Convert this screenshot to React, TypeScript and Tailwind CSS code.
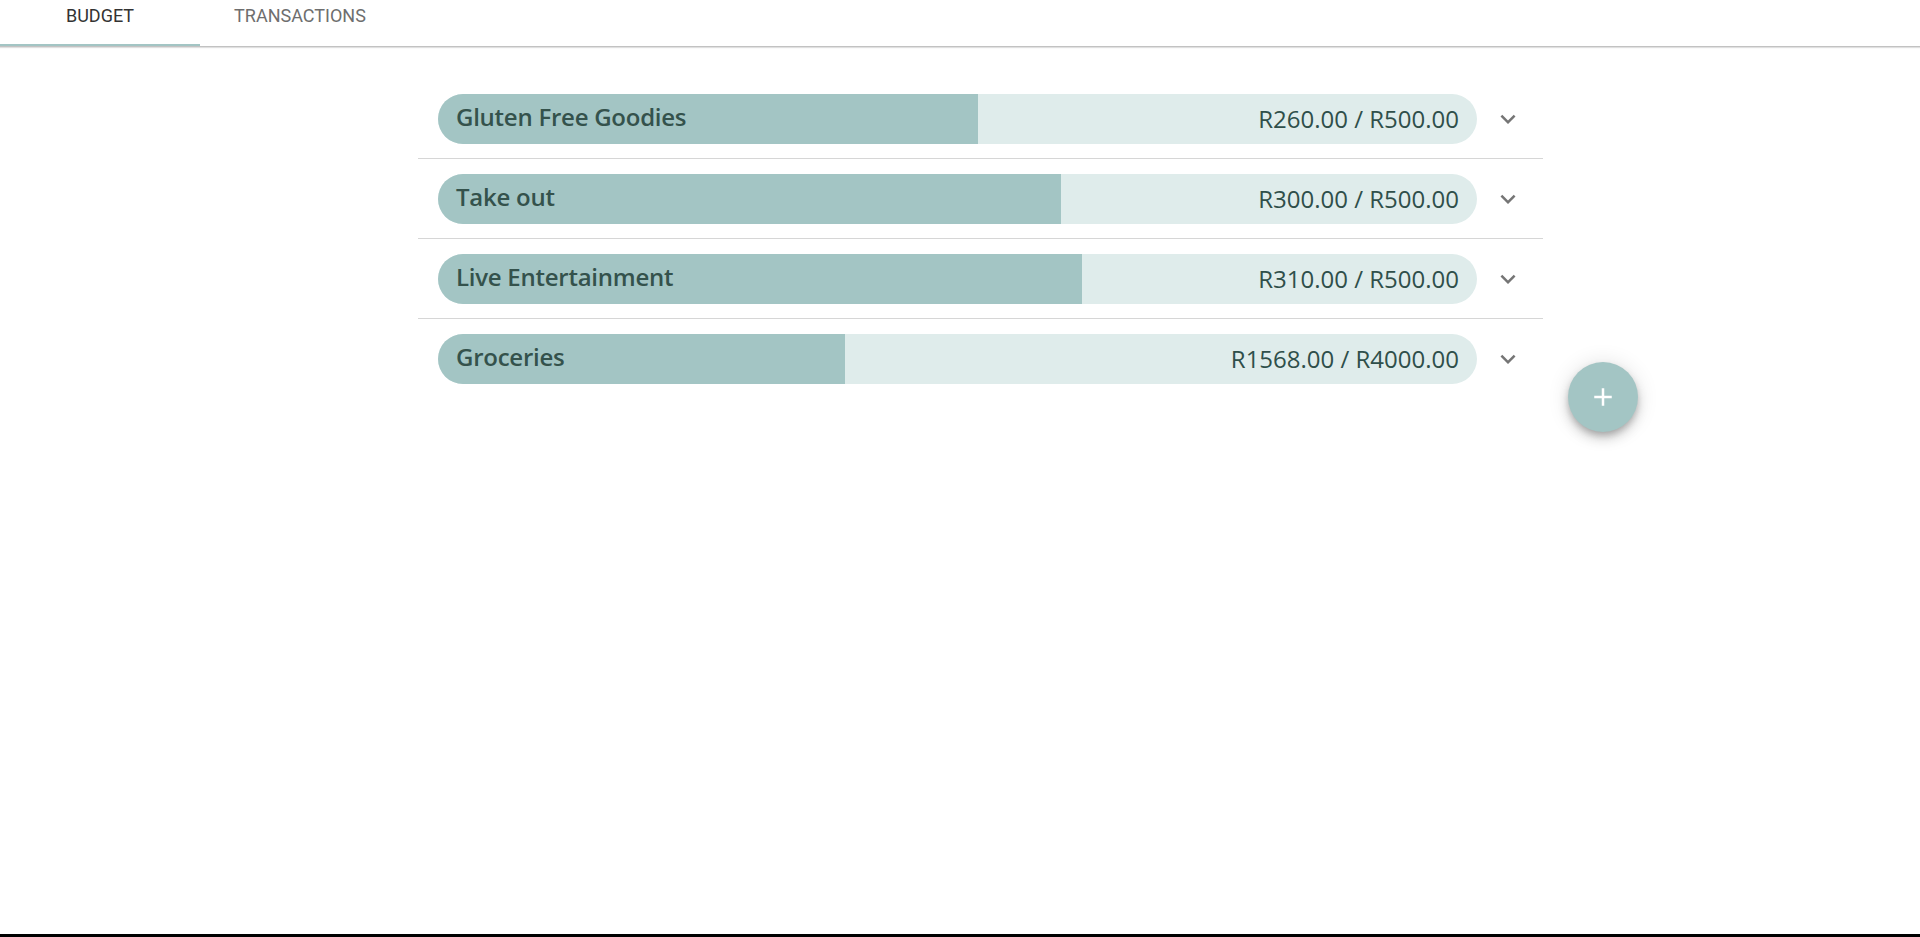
import React from "react";

const budgets = [
  { name: "Gluten Free Goodies", spent: 260, limit: 500 },
  { name: "Take out", spent: 300, limit: 500 },
  { name: "Live Entertainment", spent: 310, limit: 500 },
  { name: "Groceries", spent: 1568, limit: 4000 },
];

const tabs = ["Budget", "Transactions"];

function ExpandIcon() {
  return (
    <svg width="30" height="30" viewBox="0 0 24 24" className="fill-[#757575]">
      <path d="M16.59 8.59 12 13.17 7.41 8.59 6 10l6 6 6-6z" />
    </svg>
  );
}

function BudgetRow({ name, spent, limit, last }: { name: string; spent: number; limit: number; last: boolean }) {
  const pct = Math.min(100, (spent / limit) * 100);
  return (
    <div className={`flex items-center pl-[20px] pt-[15px] ${last ? "pb-[15px]" : "pb-[14px] border-b border-[#d6d6d6]"}`}>
      <div className="relative flex h-[50px] w-[1039px] items-center justify-between overflow-hidden rounded-full bg-[#dfeceb]">
        {/* progress fill */}
        <div className="absolute inset-y-0 left-0 bg-[#a3c5c4]" style={{ width: `${pct}%` }} />
        <span className="relative pb-[4px] pl-[18px] text-[24px] font-semibold tracking-[-0.25px] text-[#34524c]">{name}</span>
        <span className="relative pr-[18px] text-[24px] text-[#2f4f4a]">
          R{spent.toFixed(2)} / R{limit.toFixed(2)}
        </span>
      </div>
      <div className="flex w-[62px] justify-center">
        <ExpandIcon />
      </div>
    </div>
  );
}

export default function App() {
  return (
    <div className="flex h-[937px] flex-col bg-white font-['Open_Sans',sans-serif]">
      <header className="flex border-b border-[#c2c2c2] shadow-[0_1px_1px_rgba(0,0,0,0.12)]">
        {tabs.map((tab, i) => (
          <div
            key={tab}
            className={`flex h-[46px] w-[200px] justify-center border-b-2 pt-[5px] font-['Roboto',sans-serif] text-[18px] uppercase leading-[22px] ${
              i === 0 ? "border-[#a3c5c4] text-[#333333]" : "border-transparent text-[#6e6e6e]"
            }`}
          >
            {tab}
          </div>
        ))}
      </header>

      <main className="flex flex-1 items-start pl-[418px] pt-[32px]">
        <div className="w-[1125px] rounded-[4px] bg-white">
          {budgets.map((b, i) => (
            <BudgetRow key={b.name} {...b} last={i === budgets.length - 1} />
          ))}
        </div>

        <button
          type="button"
          aria-label="Add budget"
          className="ml-[25px] mt-[283px] flex h-[70px] w-[70px] items-center justify-center rounded-full bg-[#a3c5c4] shadow-[0_4px_6px_-1px_rgba(0,0,0,0.2),0_7px_12px_0_rgba(0,0,0,0.14),0_1px_22px_0_rgba(0,0,0,0.12)]"
        >
          <svg width="30" height="30" viewBox="0 0 24 24" className="fill-white">
            <path d="M19 13h-6v6h-2v-6H5v-2h6V5h2v6h6v2z" />
          </svg>
        </button>
      </main>

      <div className="h-[3px] bg-black" />
    </div>
  );
}
